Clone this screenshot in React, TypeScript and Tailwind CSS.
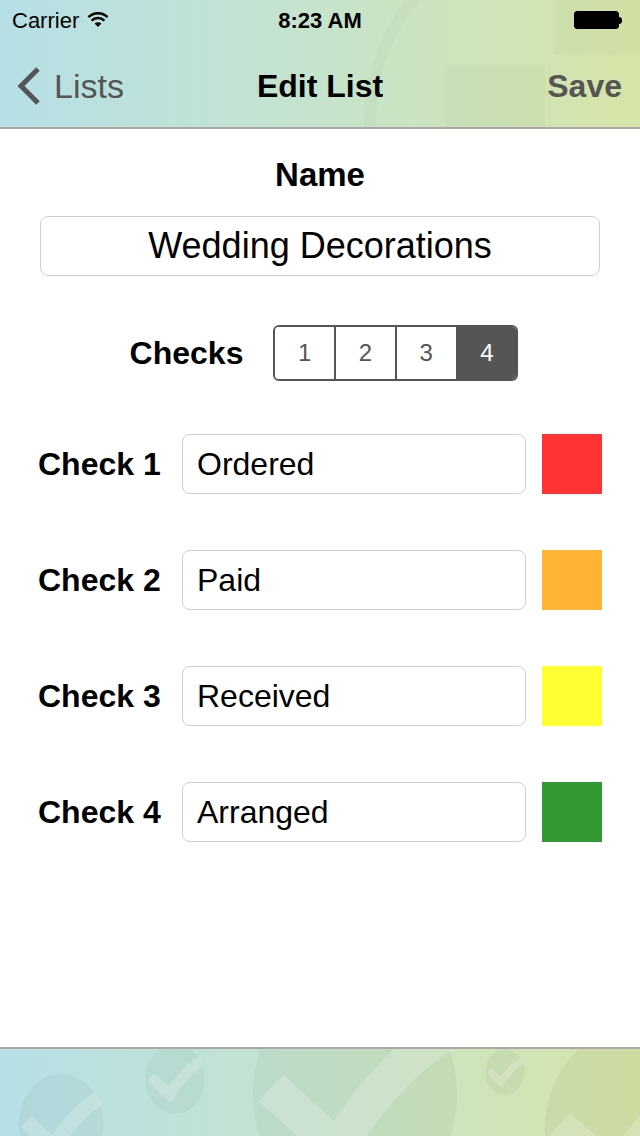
import React from "react";

type CheckRow = {
  label: string;
  value: string;
  color: string;
};

const rows: CheckRow[] = [
  { label: "Check 1", value: "Ordered", color: "bg-[#ff3333]" },
  { label: "Check 2", value: "Paid", color: "bg-[#ffb533]" },
  { label: "Check 3", value: "Received", color: "bg-[#ffff33]" },
  { label: "Check 4", value: "Arranged", color: "bg-[#339933]" },
];

const Wifi = () => (
  <svg width="22" height="16" viewBox="0 0 22 16">
    <path d="M11 15 L7.6 11.6 A4.8 4.8 0 0 1 14.4 11.6 Z" fill="#000" />
    <path d="M4.6 8.6 A9 9 0 0 1 17.4 8.6" stroke="#000" strokeWidth="2.4" fill="none" />
    <path d="M1.4 5.2 A13.6 13.6 0 0 1 20.6 5.2" stroke="#000" strokeWidth="2.4" fill="none" />
  </svg>
);

const Battery = () => (
  <div className="flex items-center">
    <div className="h-[18px] w-[45px] rounded-[3px] border border-black bg-black p-px" />
    <div className="h-[7px] w-[3px] rounded-r-sm bg-black" />
  </div>
);

const Check = ({ cx, cy, r }: { cx: number; cy: number; r: number }) => (
  <g>
    <ellipse cx={cx} cy={cy} rx={r * 0.85} ry={r} fill="#000" fillOpacity="0.035" />
    <path
      d={`M${cx - r * 0.7} ${cy - r * 0.05} L${cx - r * 0.15} ${cy + r * 0.45} Q${cx + r * 0.3} ${cy - r * 0.25} ${cx + r * 0.75} ${cy - r * 0.5}`}
      stroke="#fff"
      strokeOpacity="0.2"
      strokeWidth={r * 0.3}
      fill="none"
    />
  </g>
);

const Backdrop = ({ children, className }: { children?: React.ReactNode; className: string }) => (
  <div className={`relative overflow-hidden bg-gradient-to-r from-[#b6e0e7] via-[#c6e3cc] to-[#d6e4a6] ${className}`}>
    {children}
  </div>
);

export default function App() {
  return (
    <div className="flex h-[1136px] w-[640px] flex-col bg-white text-black" style={{ fontFamily: '"Liberation Sans", Arial, sans-serif' }}>
      <Backdrop className="h-[129px] shrink-0 border-b-2 border-[#a9aaa6]">
        <svg className="absolute inset-0" width="640" height="128">
          <circle cx="560" cy="120" r="190" fill="none" stroke="#000" strokeOpacity="0.02" strokeWidth="12" />
          <rect x="555" y="0" width="85" height="55" fill="#000" fillOpacity="0.02" />
          <rect x="445" y="65" width="100" height="63" fill="#000" fillOpacity="0.02" />
        </svg>
        <div className="relative flex h-10 items-center justify-between px-3 text-[22px]">
          <div className="flex w-[160px] items-center gap-2">
            <span>Carrier</span>
            <Wifi />
          </div>
          <span className="font-bold">8:23 AM</span>
          <div className="flex w-[160px] justify-end pr-[6px]">
            <Battery />
          </div>
        </div>
        <div className="relative flex h-[88px] items-center justify-between px-4 pt-1 text-[32px]">
          <div className="flex w-[160px] items-center gap-3 text-[#555]">
            <svg width="26" height="40" viewBox="0 0 26 40">
              <path d="M22 3 L5 20 L22 37" stroke="#555" strokeWidth="5" fill="none" />
            </svg>
            <span className="text-[34px]">Lists</span>
          </div>
          <span className="font-bold">Edit List</span>
          <div className="flex w-[160px] justify-end pr-[2px] font-bold text-[#555]">Save</div>
        </div>
      </Backdrop>

      <main className="flex flex-1 flex-col px-10 pt-[28px]">
        <h2 className="text-center text-[33px] font-bold leading-9">Name</h2>
        <div className="mt-[23px] flex h-[60px] items-center justify-center rounded-lg border border-[#cfcfcf] text-[36px]">
          Wedding Decorations
        </div>

        <div className="mt-[49px] ml-2 flex items-center justify-center gap-[30px]">
          <span className="text-[32px] font-bold">Checks</span>
          <div className="flex h-[56px] w-[245px] overflow-hidden rounded-md border-2 border-[#555] text-[24px] text-[#555]">
            {["1", "2", "3", "4"].map((n, i) => (
              <div
                key={n}
                className={`flex flex-1 items-center justify-center ${i > 0 ? "border-l-2 border-[#555]" : ""} ${i === 3 ? "bg-[#555] text-white" : "bg-white"}`}
              >
                {n}
              </div>
            ))}
          </div>
        </div>

        <div className="-mx-[2px] mt-[53px] flex flex-col gap-[56px]">
          {rows.map((row) => (
            <div key={row.label} className="flex h-[60px] items-center">
              <span className="w-[144px] text-[32px] font-bold">{row.label}</span>
              <div className="flex h-[60px] w-[344px] items-center rounded-lg border border-[#cfcfcf] px-[14px] text-[32px]">
                {row.value}
              </div>
              <div className={`ml-[16px] h-[60px] w-[60px] ${row.color}`} />
            </div>
          ))}
        </div>
      </main>

      <Backdrop className="h-[89px] shrink-0 border-t-2 border-[#a9aaa6]">
        <svg className="absolute inset-0" width="640" height="89">
          <Check cx={61} cy={75} r={50} />
          <Check cx={175} cy={30} r={35} />
          <Check cx={355} cy={45} r={120} />
          <Check cx={505} cy={23} r={23} />
          <Check cx={630} cy={80} r={100} />
        </svg>
      </Backdrop>
    </div>
  );
}
